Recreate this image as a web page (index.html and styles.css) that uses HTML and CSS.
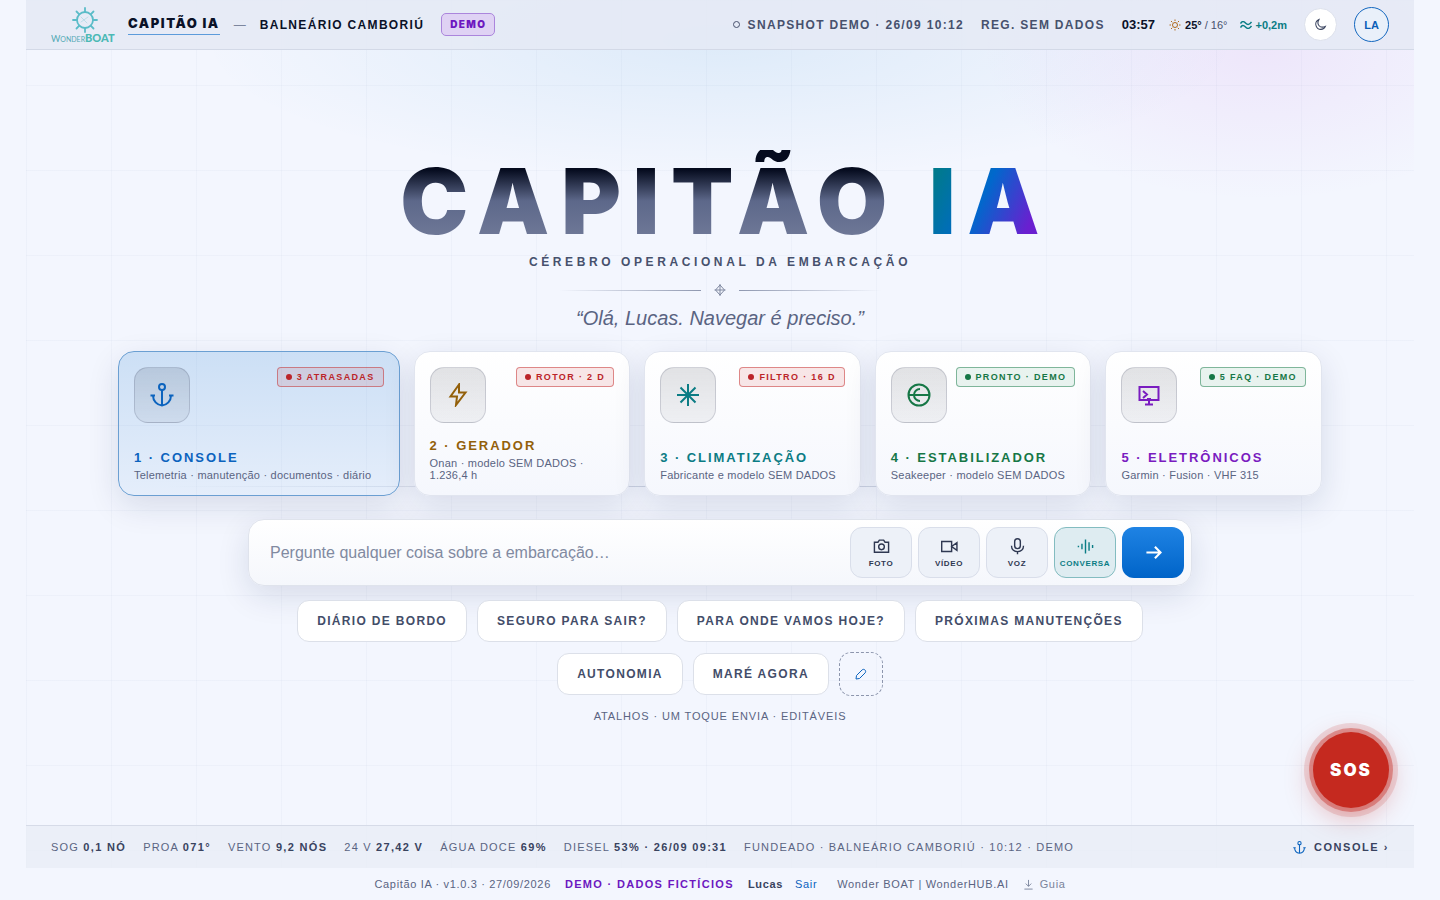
FILE: index.html
```html
<!DOCTYPE html>
<html lang="pt-BR">
<head>
    <meta charset="UTF-8">
    <meta name="viewport" content="width=device-width, initial-scale=1.0">
    <title>Capitão IA</title>
    <link rel="stylesheet" href="styles.css">
</head>
<body>
    <svg class="sprite" aria-hidden="true">
        <symbol id="anchor" viewBox="0 0 24 24"><circle cx="12" cy="4" r="3"/><path d="M12 7V22.500M.5 12.500H5M23.500 12.500H19M3 12.500C3 18 7 22 12 22.500C17 22 21 18 21 12.500"/></symbol>
    </svg>

    <div class="shell">
        <header class="topbar">
            <svg class="logo" viewBox="0 0 66 36" role="img" aria-label="Wonder Boat">
                <g fill="none" stroke="#5bbcc8" stroke-width="1.800" stroke-linecap="round">
                    <circle cx="34" cy="13" r="8"/>
                    <path d="M34 5V1M34 21V25M26 13H22M42 13H46M28.300 7.300L25.500 4.500M39.700 7.300L42.500 4.500M28.300 18.700L25.500 21.500M39.700 18.700L42.500 21.500"/>
                    <path d="M30 10L36 16M30 15L37 10" stroke-width=".6" opacity=".5"/>
                </g>
                <text class="logo-thin" x="0" y="35">W<tspan class="logo-small">ONDER</tspan></text>
                <text class="logo-bold" x="34" y="35">BOAT</text>
            </svg>
            <a class="brand" href="#">CAPITÃO IA</a>
            <span class="dash">—</span>
            <span class="place">BALNEÁRIO CAMBORIÚ</span>
            <span class="demo-tag">DEMO</span>
            <div class="top-right">
                <span class="snapshot"><i class="ring"></i>SNAPSHOT DEMO · 26/09 10:12</span>
                <span class="snapshot">REG. SEM DADOS</span>
                <span class="clock">03:57</span>
                <span class="weather">
                    <svg class="sun" viewBox="0 0 24 24"><circle cx="12" cy="12" r="5"/><path d="M12 1V4M12 20V23M1 12H4M20 12H23M4 4L6.500 6.500M17.500 17.500L20 20M4 20L6.500 17.500M17.500 6.500L20 4"/></svg>
                    <span><b>25°</b> / 16°</span>
                </span>
                <span class="tide">
                    <svg viewBox="0 0 24 16"><path d="M1 5C4 0 7 0 11 4S19 8 23 2M1 13C4 8 7 8 11 12S19 16 23 10"/></svg>
                    +0,2m
                </span>
                <button class="theme" aria-label="Tema escuro">
                    <svg viewBox="0 0 24 24"><path d="M9 3C4 12 11 20 21 15.500C18 23 7 23 4 15C2 10 4 5 9 3Z"/></svg>
                </button>
                <button class="avatar">LA</button>
            </div>
        </header>

        <main class="stage">
            <h1 class="title"><span class="t-main">CAPITÃO</span> <span class="t-ia">IA</span></h1>
            <p class="subtitle">CÉREBRO OPERACIONAL DA EMBARCAÇÃO</p>
            <div class="divider">
                <span class="line"></span>
                <svg viewBox="0 0 24 24"><path d="M12 2L21 12L12 22L3 12ZM12 0V24M1 12H23"/></svg>
                <span class="line right"></span>
            </div>
            <p class="quote">“Olá, Lucas. Navegar é preciso.”</p>

            <nav class="cards">
                <a class="card console" href="#">
                    <span class="card-top">
                        <span class="tile"><svg><use href="#anchor"/></svg></span>
                        <span class="badge red">3 ATRASADAS</span>
                    </span>
                    <span class="card-text"><strong>1 · CONSOLE</strong><small>Telemetria · manutenção · documentos · diário</small></span>
                </a>
                <a class="card gerador" href="#">
                    <span class="card-top">
                        <span class="tile"><svg viewBox="0 0 24 24"><path d="M13 1.500L4.500 13.500H11L10 22L19.500 9.500H13Z"/></svg></span>
                        <span class="badge red">ROTOR · 2 D</span>
                    </span>
                    <span class="card-text"><strong>2 · GERADOR</strong><small>Onan · modelo SEM DADOS · 1.236,4 h</small></span>
                </a>
                <a class="card clima" href="#">
                    <span class="card-top">
                        <span class="tile"><svg viewBox="0 0 24 24"><path d="M12 1V23M1 12H23M4.500 4.500L19.500 19.500M4.500 19.500L19.500 4.500"/></svg></span>
                        <span class="badge red">FILTRO · 16 D</span>
                    </span>
                    <span class="card-text"><strong>3 · CLIMATIZAÇÃO</strong><small>Fabricante e modelo SEM DADOS</small></span>
                </a>
                <a class="card estab" href="#">
                    <span class="card-top">
                        <span class="tile"><svg viewBox="0 0 24 24"><circle cx="12" cy="12" r="10.500"/><path d="M1.500 12H22.500M13 6A6 6 0 0 0 13 18"/></svg></span>
                        <span class="badge green">PRONTO · DEMO</span>
                    </span>
                    <span class="card-text"><strong>4 · ESTABILIZADOR</strong><small>Seakeeper · modelo SEM DADOS</small></span>
                </a>
                <a class="card eletro" href="#">
                    <span class="card-top">
                        <span class="tile"><svg viewBox="0 0 24 24"><path d="M2.500 4H21.500V17H2.500ZM12 17V21.500M8 21.500H16M6 8L10 11.500L6 15M10 16H14"/></svg></span>
                        <span class="badge green">5 FAQ · DEMO</span>
                    </span>
                    <span class="card-text"><strong>5 · ELETRÔNICOS</strong><small>Garmin · Fusion · VHF 315</small></span>
                </a>
            </nav>

            <form class="composer">
                <input type="text" placeholder="Pergunte qualquer coisa sobre a embarcação…" aria-label="Pergunta">
                <button type="button" class="tool">
                    <svg viewBox="0 0 24 24"><path d="M2 6H7L9 3H15L17 6H22V20H2Z"/><circle cx="12" cy="12.500" r="4"/></svg>
                    FOTO
                </button>
                <button type="button" class="tool">
                    <svg viewBox="0 0 24 24"><path d="M1 5H15V19H1ZM15 12L22.500 6.500V17.500Z"/></svg>
                    VÍDEO
                </button>
                <button type="button" class="tool">
                    <svg viewBox="0 0 24 24"><rect x="8" y="1" width="8" height="14" rx="4"/><path d="M3.500 11C3.500 22 20.500 22 20.500 11M12 19V23"/></svg>
                    VOZ
                </button>
                <button type="button" class="tool talk">
                    <svg viewBox="0 0 24 24"><path d="M2 11V13M7 8V16M12 2V22M17 6V18M22 10V14"/></svg>
                    CONVERSA
                </button>
                <button type="submit" class="send" aria-label="Enviar">
                    <svg viewBox="0 0 24 24"><path d="M2 12H22M14 4L22 12L14 20"/></svg>
                </button>
            </form>

            <div class="chips">
                <button>DIÁRIO DE BORDO</button>
                <button>SEGURO PARA SAIR?</button>
                <button>PARA ONDE VAMOS HOJE?</button>
                <button>PRÓXIMAS MANUTENÇÕES</button>
                <button>AUTONOMIA</button>
                <button>MARÉ AGORA</button>
                <button class="edit" aria-label="Editar atalhos">
                    <svg viewBox="0 0 24 24"><path d="M2 22L3 15L14 4C18 0 24 6 20 10L9 21Z"/></svg>
                </button>
            </div>
            <p class="hint">ATALHOS · UM TOQUE ENVIA · EDITÁVEIS</p>
        </main>

        <section class="status">
            <span>SOG <b>0,1 NÓ</b></span>
            <span>PROA <b>071°</b></span>
            <span>VENTO <b>9,2 NÓS</b></span>
            <span>24 V <b>27,42 V</b></span>
            <span>ÁGUA DOCE <b>69%</b></span>
            <span>DIESEL <b>53% · 26/09 09:31</b></span>
            <span>FUNDEADO · BALNEÁRIO CAMBORIÚ · 10:12 · DEMO</span>
            <a class="to-console" href="#"><svg><use href="#anchor"/></svg>CONSOLE ›</a>
        </section>
    </div>

    <footer class="footer">
        <span>Capitão IA · v1.0.3 · 27/09/2026</span>
        <span class="ficticio">DEMO · DADOS FICTÍCIOS</span>
        <span class="user"><b>Lucas</b><a href="#">Sair</a></span>
        <span class="maker">Wonder BOAT | WonderHUB.AI</span>
        <a class="guide" href="#"><svg viewBox="0 0 24 24"><path d="M12 2V16M6 10L12 16L18 10M3 22H21"/></svg>Guia</a>
    </footer>

    <button class="sos">SOS</button>
</body>
</html>
```
FILE: styles.css
```css
* {
    box-sizing: border-box;
}
body {
    margin: 0;
    min-height: 100vh;
    display: flex;
    flex-direction: column;
    position: relative;
    background: #f3f6fe;
    color: #47516d;
    font-family: "Liberation Sans", Arial, sans-serif;
    font-size: 11px;
}
h1, p {
    margin: 0;
}
a {
    color: inherit;
    text-decoration: none;
}
button {
    font-family: inherit;
    cursor: pointer;
}
svg {
    fill: none;
    stroke: currentColor;
    stroke-width: 2;
    flex: none;
}
.sprite {
    display: none;
}

/* shell with chart grid, horizon line and glows */
.shell {
    flex: 1;
    display: flex;
    flex-direction: column;
    margin: 0 26px;
    background:
        linear-gradient(90deg, transparent 10%, rgba(40, 60, 110, 0.18) 40% 60%, transparent 90%) 0 56% / 100% 1px no-repeat,
        repeating-linear-gradient(90deg, rgba(40, 70, 130, 0.03) 0 1px, transparent 1px 85px),
        repeating-linear-gradient(rgba(40, 70, 130, 0.03) 0 1px, transparent 1px 85px),
        radial-gradient(280px 150px at 89% 50px, rgba(190, 90, 220, 0.1), transparent),
        radial-gradient(520px 140px at 50% 40px, rgba(0, 120, 200, 0.09), transparent);
}

/* top bar */
.topbar {
    display: flex;
    align-items: center;
    height: 50px;
    padding: 0 25px;
    background: rgba(229, 233, 245, 0.88);
    border-bottom: 1px solid #d3d9e7;
}
.logo {
    width: 66px;
    height: 36px;
    margin-right: 11px;
}
.logo text {
    stroke: none;
    fill: #53a9b5;
    font-family: Lato, sans-serif;
}
.logo .logo-thin {
    font-size: 9px;
}
.logo .logo-small {
    font-size: 7px;
}
.logo .logo-bold {
    font-size: 11px;
    font-weight: 900;
    fill: #4bb9b5;
}
.brand {
    padding-bottom: 2px;
    border-bottom: 1px solid #5c9bdb;
    color: #0a1128;
    font: 900 13px/18px Inter, sans-serif;
    letter-spacing: 0.12em;
}
.dash {
    margin: 0 14px;
    font-size: 12px;
    color: #7d869e;
}
.place {
    color: #0a1128;
    font-size: 12px;
    font-weight: 600;
    letter-spacing: 0.11em;
}
.demo-tag {
    margin-left: 17px;
    padding: 4px 8px;
    border: 1px solid #ab85dc;
    border-radius: 5px;
    background: #dfd2f4;
    color: #6d18c0;
    font: 900 10px/13px Inter, sans-serif;
    letter-spacing: 0.14em;
}
.top-right {
    display: flex;
    align-items: center;
    margin-left: auto;
    white-space: nowrap;
}
.snapshot {
    display: flex;
    align-items: center;
    gap: 8px;
    margin-right: 17px;
    font-size: 12px;
    font-weight: 600;
    letter-spacing: 0.11em;
}
.ring {
    width: 7px;
    height: 7px;
    border: 1px solid #47516d;
    border-radius: 50%;
}
.clock {
    margin-right: 2px;
    color: #0a1128;
    font-size: 13px;
    font-weight: 700;
}
.weather, .tide {
    display: flex;
    align-items: center;
    gap: 4px;
    margin-left: 12px;
}
.weather b {
    color: #0a1128;
}
.sun {
    width: 12px;
    height: 12px;
    color: #b0691a;
}
.tide {
    color: #0b7d85;
    font-weight: 700;
}
.tide svg {
    width: 12px;
    height: 8px;
    stroke-width: 3;
}
.theme {
    display: grid;
    place-items: center;
    width: 33px;
    height: 33px;
    margin: 0 17px;
    padding: 0;
    border: 1px solid #dde1ec;
    border-radius: 50%;
    background: #fff;
    color: #39435f;
}
.theme svg {
    width: 13px;
    height: 13px;
}
.avatar {
    width: 35px;
    height: 35px;
    padding: 0;
    border: 1px solid #1467bf;
    border-radius: 50%;
    background: #e9f0fa;
    color: #0b5fb8;
    font-size: 11px;
    font-weight: 700;
}

/* stage */
.stage {
    flex: 1;
    display: flex;
    flex-direction: column;
    align-items: center;
    justify-content: center;
    padding: 3px 92px 0;
}
.title {
    padding-left: 0.13em; /* balances the tracking after the last letter */
    font: 900 91px/94px Inter, sans-serif;
    letter-spacing: 0.13em;
    white-space: nowrap;
}
.title span {
    display: inline-block;
    margin-top: -4px;
    padding-top: 4px;
    -webkit-background-clip: text;
    background-clip: text;
    color: transparent;
}
.t-main {
    background-image: linear-gradient(#050b1e 20%, #5d688a 52%, #747d9b);
}
.t-ia {
    background-image: linear-gradient(115deg, #007a8c 10%, #0068cc 45%, #6a1fd0 80%);
}
.subtitle {
    margin-top: 6px;
    font-size: 12px;
    line-height: 16px;
    font-weight: 600;
    letter-spacing: 0.3em;
}
.divider {
    display: flex;
    align-items: center;
    gap: 13px;
    margin-top: 14px;
    color: #7e879f;
}
.divider svg {
    width: 12px;
    height: 12px;
}
.line {
    width: 142px;
    height: 1px;
    background: linear-gradient(90deg, transparent, #8f98b0);
}
.line.right {
    background: linear-gradient(90deg, #8f98b0, transparent);
}
.quote {
    margin-top: 10px;
    color: #5a6482;
    font-size: 20px;
    line-height: 24px;
    font-style: italic;
}

/* cards */
.cards {
    display: grid;
    grid-template-columns: 1.3fr repeat(4, 1fr);
    gap: 14px;
    width: 100%;
    max-width: 1204px;
    margin-top: 21px;
}
.card {
    display: flex;
    flex-direction: column;
    justify-content: space-between;
    min-height: 145px;
    padding: 15px 15px 14px;
    border: 1px solid #e1e5ef;
    border-radius: 16px;
    background: linear-gradient(#fff, #f5f7fd);
    box-shadow: 0 10px 32px rgba(20, 35, 80, 0.12);
}
.card-top {
    display: flex;
    justify-content: space-between;
    align-items: flex-start;
}
.tile {
    display: grid;
    place-items: center;
    width: 56px;
    height: 56px;
    border: 1px solid rgba(30, 40, 70, 0.16);
    border-radius: 14px;
    background: linear-gradient(rgba(20, 25, 40, 0.12), rgba(20, 25, 40, 0.05));
}
.tile svg {
    width: 24px;
    height: 24px;
}
.badge {
    display: flex;
    align-items: center;
    gap: 5px;
    padding: 0 8px;
    border: 1px solid;
    border-radius: 4px;
    font-size: 9px;
    line-height: 18px;
    font-weight: 700;
    letter-spacing: 0.15em;
    white-space: nowrap;
}
.badge::before {
    content: "";
    width: 6px;
    height: 6px;
    border-radius: 50%;
    background: currentColor;
}
.badge.red {
    border-color: rgba(196, 40, 40, 0.5);
    background: rgba(196, 40, 40, 0.11);
    color: #bb2429;
}
.badge.green {
    border-color: rgba(20, 120, 70, 0.5);
    background: rgba(20, 130, 80, 0.09);
    color: #167746;
}
.card-text strong {
    display: block;
    font-size: 13px;
    line-height: 18px;
    letter-spacing: 0.15em;
    white-space: nowrap;
}
.card-text small {
    display: block;
    margin-top: 2px;
    color: #5a6482;
    font-size: 11px;
    line-height: 12px;
    letter-spacing: 0.02em;
}
.console {
    border-color: #6b9fd2;
    background: linear-gradient(rgba(0, 105, 200, 0.16), rgba(0, 105, 200, 0.06));
    color: #0b63be;
}
.gerador { color: #93600a; }
.clima { color: #0b7c84; }
.estab { color: #167746; }
.eletro { color: #7a1cc0; }

/* composer */
.composer {
    display: flex;
    gap: 6px;
    width: 100%;
    max-width: 944px;
    margin-top: 23px;
    padding: 7px;
    border: 1px solid #dfe3ec;
    border-radius: 16px;
    background: linear-gradient(#fff, #f5f7fc);
    box-shadow: 0 10px 32px rgba(20, 35, 80, 0.12);
}
.composer input {
    flex: 1;
    min-width: 0;
    padding: 0 14px;
    border: 0;
    background: none;
    color: #0a1128;
    font: 16px "Liberation Sans", Arial, sans-serif;
}
.composer input::placeholder {
    color: #818aa1;
}
.tool, .send {
    display: flex;
    flex-direction: column;
    align-items: center;
    justify-content: center;
    gap: 4px;
    width: 62px;
    height: 51px;
    padding: 0;
    border: 1px solid #d9deea;
    border-radius: 12px;
    background: #edf1f8;
    color: #2f3852;
    font-size: 8px;
    font-weight: 700;
    letter-spacing: 0.08em;
}
.tool svg {
    width: 17px;
    height: 17px;
}
.talk {
    border-color: #83bcc0;
    background: #deecf1;
    color: #0b7d85;
}
.send {
    border: 0;
    background: linear-gradient(#1f83e4, #0064c8);
    color: #fff;
}
.send svg {
    width: 17px;
    height: 17px;
    stroke-width: 3;
}

/* shortcuts */
.chips {
    display: flex;
    flex-wrap: wrap;
    align-items: center;
    justify-content: center;
    gap: 10px;
    max-width: 944px;
    margin-top: 14px;
}
.chips button {
    height: 42px;
    padding: 0 19px;
    border: 1px solid #dce0e9;
    border-radius: 12px;
    background: #fff;
    color: #434d69;
    font-size: 12px;
    font-weight: 600;
    letter-spacing: 0.11em;
}
.chips .edit {
    display: grid;
    place-items: center;
    width: 44px;
    height: 44px;
    padding: 0;
    border: 1px dashed #8d96ad;
    background: none;
    color: #0b63be;
}
.edit svg {
    width: 12px;
    height: 12px;
}
.hint {
    margin-top: 12px;
    color: #5a6482;
    line-height: 16px;
    letter-spacing: 0.08em;
}

/* telemetry strip */
.status {
    display: flex;
    align-items: center;
    gap: 17px;
    height: 43px;
    padding: 0 25px;
    border-top: 1px solid #d6dbe8;
    background: rgba(232, 237, 246, 0.8);
    color: #5a6482;
    letter-spacing: 0.11em;
    white-space: nowrap;
}
.status b {
    color: #39435f;
    letter-spacing: 0.12em;
}
.to-console {
    display: flex;
    align-items: center;
    gap: 8px;
    margin-left: auto;
    color: #39435f;
    font-weight: 600;
    letter-spacing: 0.14em;
}
.to-console svg {
    width: 13px;
    height: 13px;
    color: #0b63be;
}

.footer {
    display: flex;
    align-items: center;
    justify-content: center;
    gap: 14px;
    height: 32px;
    color: #5a6482;
    letter-spacing: 0.06em;
}
.ficticio {
    color: #6d18c0;
    font-weight: 700;
    letter-spacing: 0.12em;
}
.user {
    display: flex;
    gap: 12px;
}
.user b {
    color: #39435f;
}
.user a {
    color: #0b63be;
}
.maker {
    margin-left: 6px;
}
.guide {
    display: flex;
    align-items: center;
    gap: 6px;
    color: #7a839b;
}
.guide svg {
    width: 11px;
    height: 11px;
}

/* emergency button floats over the stage */
.sos {
    position: absolute;
    right: 51px;
    bottom: 92px;
    width: 76px;
    height: 76px;
    border: 0;
    border-radius: 50%;
    background: #c5291f;
    box-shadow: 0 0 0 4px rgba(197, 41, 31, 0.4), 0 0 0 9px rgba(197, 41, 31, 0.15), 0 8px 28px rgba(197, 41, 31, 0.35);
    color: #fff;
    font: 900 17px Inter, sans-serif;
    letter-spacing: 0.12em;
}
```
